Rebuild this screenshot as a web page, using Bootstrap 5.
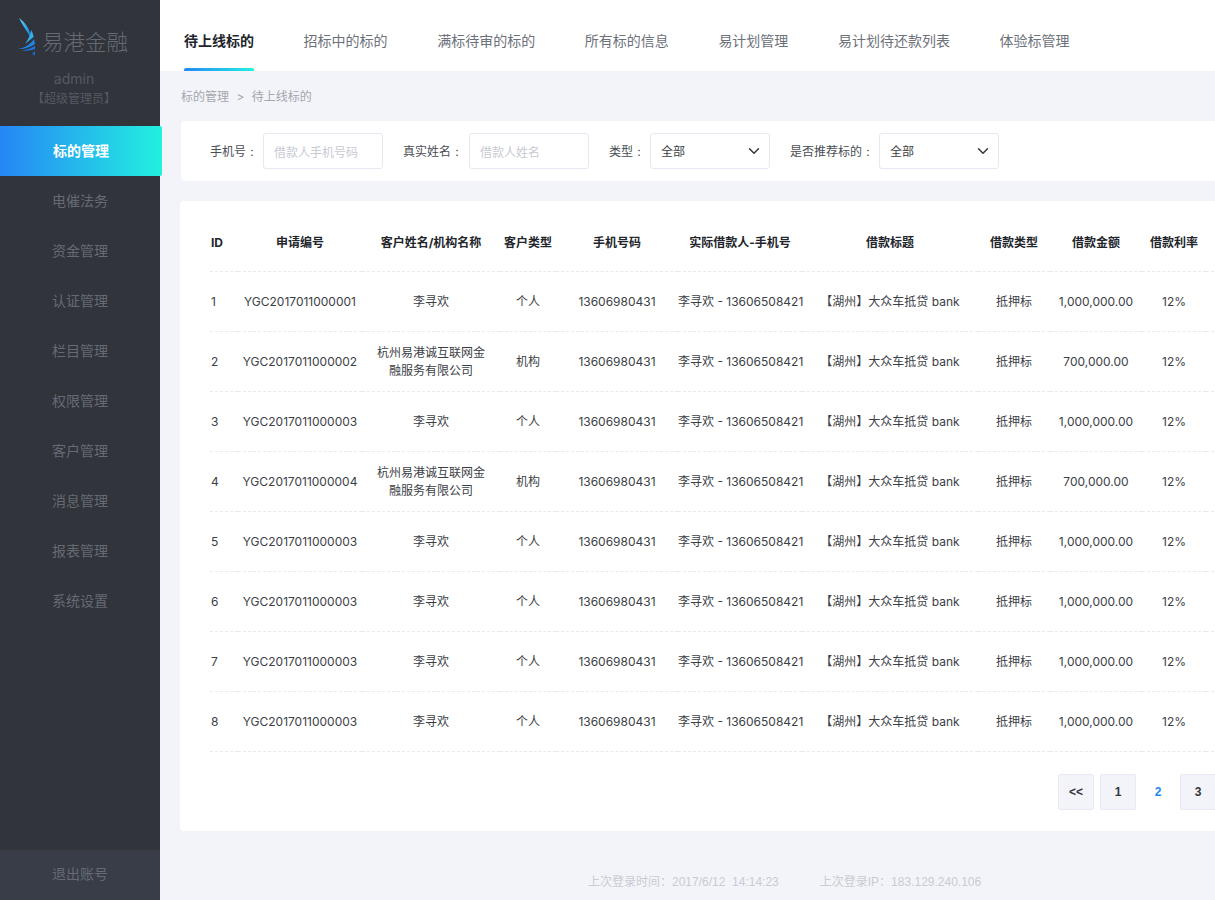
<!DOCTYPE html>
<html lang="zh-CN">
<head>
    <meta charset="UTF-8">
    <meta name="viewport" content="width=device-width, initial-scale=1.0">
    <title>标的管理</title>
    <link href="https://cdn.jsdelivr.net/npm/bootstrap@5.3.3/dist/css/bootstrap.min.css" rel="stylesheet">
    <script src="https://cdn.jsdelivr.net/npm/bootstrap@5.3.3/dist/js/bootstrap.bundle.min.js"></script>
    <style>
        body {
            font-family: Inter, "Noto Sans CJK SC", sans-serif;
            font-size: 12px;
            background: #f3f4f9;
            color: #3b3e45;
            height: 100vh;
            overflow: hidden;
        }
        /* sidebar */
        .side-bar { width: 160px; background: #31343b; position: relative; z-index: 2; }
        .logo-row { padding: 18px 0 0 18px; height: 70px; }
        .logo-name { font-size: 21.5px; color: #666a73; line-height: 1; margin: 14px 0 0 6px; font-weight: 300; white-space: nowrap; }
        .user-name { font-size: 14px; color: #555962; line-height: 18px; text-align: center; margin-left: -12px; }
        .user-role { color: #555962; line-height: 20px; text-align: center; margin: 1px 0 17px -12px; }
        .menu-link { display: block; height: 50px; line-height: 50px; text-align: center; font-size: 14px; color: #666a73; text-decoration: none; }
        .menu-link.on { width: 162px; color: #fff; font-weight: 700; background: linear-gradient(90deg, #2686f5, #22f0e0); border-radius: 0 2px 2px 0; }
        .menu-link.logout-link { background: #383d48; line-height: 48px; }
        /* top tabs */
        .top-tabs { background: #fff; height: 71px; padding-left: 24px; gap: 49.6px; flex-wrap: nowrap; }
        .top-tabs .nav-link { padding: 0; height: 71px; line-height: 81px; font-size: 14px; color: #6d717a; white-space: nowrap; position: relative; }
        .top-tabs .nav-link.active { color: #22252b; font-weight: 700; }
        .top-tabs .nav-link.active::after { content: ""; position: absolute; left: 0; right: 0; bottom: 0; height: 3px; border-radius: 2px 2px 0 0; background: linear-gradient(90deg, #2686f5, #22f0e0); }
        .crumbs { padding: 17px 0 0 21px; height: 50px; line-height: 17px; color: #a3a6ae; }
        .crumbs span { margin: 0 4px; }
        /* filter */
        .main-inner { width: 1128px; }
        .filter-box { background: #fff; height: 60px; margin-left: 21px; padding-left: 29px; border-radius: 4px; gap: 20px; }
        .filter-item { gap: 5px; color: #4a4d54; }
        .filter-item label { white-space: nowrap; padding-top: 2px; }
        .filter-item.name-item { gap: 6px; }
        .colon { display: inline-block; width: 12px; text-align: center; }
        .filter-box .form-control, .filter-box .form-select { width: 120px; height: 36px; font-size: 12px; border-color: #e6e8f2; border-radius: 3px; padding: 2px 10px 0; color: #3b3e45; box-shadow: none; }
        .filter-box .form-select { background-position: right 7px center; }
        .filter-box .form-control::placeholder { color: #c8cad3; }
        /* table */
        .table-box { background: #fff; margin: 20px 0 0 20px; height: 630px; padding: 14px 30px 0; border-radius: 4px; }
        .loan-table { table-layout: fixed; margin: 0; --bs-table-color: #3b3e45; --bs-table-border-color: #e8eaf0; }
        .loan-table th, .loan-table td { padding: 0; text-align: center; vertical-align: middle; line-height: 18px; border-bottom: 1px dashed #e8eaf0; }
        .loan-table th { height: 56px; font-weight: 700; color: #22252b; white-space: nowrap; }
        .loan-table td { height: 60px; padding-top: 1px; white-space: nowrap; }
        .loan-table .id-cell { text-align: left; padding-left: 1px; }
        .org-name { display: block; width: 108px; margin: 0 auto; white-space: normal; }
        /* pager */
        .pager-row { margin: 22px 42px 0 0; gap: 6px; }
        .pager-row .page-item .page-link { width: 36px; height: 36px; line-height: 34px; margin-left: 0; padding: 0; text-align: center; font-family: "Liberation Sans", sans-serif; font-size: 12px; font-weight: 700; color: #33363d; background: #f3f4f9; border: 1px solid #e8eaf3; border-radius: 2px !important; }
        .pager-row .page-item.active .page-link { width: 32px; background: transparent; border-color: transparent; color: #2686f5; }
        /* footer */
        .login-foot { padding: 42px 0 0 428px; gap: 41px; font-family: "Liberation Sans", "Noto Sans CJK SC", sans-serif; color: #c9cbd2; white-space: nowrap; line-height: 18px; }
    </style>
</head>
<body class="d-flex">
    <aside class="side-bar d-flex flex-column flex-shrink-0">
        <div class="logo-row d-flex">
            <svg width="18" height="38" viewBox="0 0 18 38" class="flex-shrink-0">
                <defs>
                    <linearGradient id="sailFill" x1="0" y1="0" x2="0.5" y2="1">
                        <stop offset="0" stop-color="#5ad2f8"/>
                        <stop offset="1" stop-color="#1c8de8"/>
                    </linearGradient>
                </defs>
                <path d="M1 0C7 4 12 11 13 20C9 13 4 7 1 0Z" fill="url(#sailFill)"/>
                <path d="M13 12C15 15 15.500 18 15.500 19L7 26C10 22 12.500 17 13 12Z" fill="#2fb0f0"/>
                <path d="M16 21L17 26C11 30 5 31.500 0 31C7 30 13 26 16 21Z" fill="#1e86e8"/>
                <path d="M17 27.500L17 31C12 33 7 33 3 32C9 32 14 30 17 27.500Z" fill="#1a72dd"/>
                <path d="M14 36L17 33L17 37.500Z" fill="#1668d8"/>
            </svg>
            <div class="logo-name">易港金融</div>
        </div>
        <div class="user-name">admin</div>
        <div class="user-role">【超级管理员】</div>
        <a class="menu-link on" href="#">标的管理</a>
        <a class="menu-link" href="#">电催法务</a>
        <a class="menu-link" href="#">资金管理</a>
        <a class="menu-link" href="#">认证管理</a>
        <a class="menu-link" href="#">栏目管理</a>
        <a class="menu-link" href="#">权限管理</a>
        <a class="menu-link" href="#">客户管理</a>
        <a class="menu-link" href="#">消息管理</a>
        <a class="menu-link" href="#">报表管理</a>
        <a class="menu-link" href="#">系统设置</a>
        <a class="menu-link logout-link mt-auto" href="#">退出账号</a>
    </aside>

    <main class="flex-grow-1 overflow-hidden">
        <ul class="nav top-tabs">
            <li class="nav-item"><a class="nav-link active" href="#">待上线标的</a></li>
            <li class="nav-item"><a class="nav-link" href="#">招标中的标的</a></li>
            <li class="nav-item"><a class="nav-link" href="#">满标待审的标的</a></li>
            <li class="nav-item"><a class="nav-link" href="#">所有标的信息</a></li>
            <li class="nav-item"><a class="nav-link" href="#">易计划管理</a></li>
            <li class="nav-item"><a class="nav-link" href="#">易计划待还款列表</a></li>
            <li class="nav-item"><a class="nav-link" href="#">体验标管理</a></li>
        </ul>

        <div class="main-inner">
            <div class="crumbs">标的管理 <span>&gt;</span> 待上线标的</div>

            <!-- filters -->
            <form class="filter-box d-flex align-items-center">
                <div class="filter-item d-flex align-items-center">
                    <label>手机号<span class="colon">:</span></label>
                    <input type="text" class="form-control" placeholder="借款人手机号码">
                </div>
                <div class="filter-item name-item d-flex align-items-center">
                    <label>真实姓名<span class="colon">:</span></label>
                    <input type="text" class="form-control" placeholder="借款人姓名">
                </div>
                <div class="filter-item d-flex align-items-center">
                    <label>类型<span class="colon">:</span></label>
                    <select class="form-select"><option>全部</option></select>
                </div>
                <div class="filter-item d-flex align-items-center">
                    <label>是否推荐标的<span class="colon">:</span></label>
                    <select class="form-select"><option>全部</option></select>
                </div>
            </form>

            <!-- list -->
            <div class="table-box">
                <table class="table loan-table">
                    <colgroup id="loanCols"></colgroup>
                    <thead>
                        <tr>
                            <th class="id-cell">ID</th>
                            <th>申请编号</th>
                            <th>客户姓名/机构名称</th>
                            <th>客户类型</th>
                            <th>手机号码</th>
                            <th>实际借款人-手机号</th>
                            <th>借款标题</th>
                            <th>借款类型</th>
                            <th>借款金额</th>
                            <th>借款利率</th>
                            <th></th>
                        </tr>
                    </thead>
                    <tbody id="loanRows"></tbody>
                </table>
                <ul class="pagination pager-row justify-content-end">
                    <li class="page-item"><a class="page-link" href="#">&lt;&lt;</a></li>
                    <li class="page-item"><a class="page-link" href="#">1</a></li>
                    <li class="page-item active"><a class="page-link" href="#">2</a></li>
                    <li class="page-item"><a class="page-link" href="#">3</a></li>
                </ul>
            </div>

            <div class="login-foot d-flex">
                <span>上次登录时间：2017/6/12&nbsp;&nbsp;14:14:23</span>
                <span>上次登录IP：183.129.240.106</span>
            </div>
        </div>
    </main>

    <script>
        // Column widths
        const widths = [28, 124, 138, 56, 122, 124, 176, 72, 92, 64, 52];
        document.getElementById("loanCols").innerHTML = widths.map(w => `<col style="width:${w}px">`).join("");

        // Rows
        const person = "李寻欢";
        const org = "杭州易港诚互联网金融服务有限公司";
        const loans = [
            ["YGC2017011000001", person, "个人", "1,000,000.00"],
            ["YGC2017011000002", org, "机构", "700,000.00"],
            ["YGC2017011000003", person, "个人", "1,000,000.00"],
            ["YGC2017011000004", org, "机构", "700,000.00"],
            ["YGC2017011000003", person, "个人", "1,000,000.00"],
            ["YGC2017011000003", person, "个人", "1,000,000.00"],
            ["YGC2017011000003", person, "个人", "1,000,000.00"],
            ["YGC2017011000003", person, "个人", "1,000,000.00"]
        ];
        document.getElementById("loanRows").innerHTML = loans.map((l, i) => `
            <tr>
                <td class="id-cell">${i + 1}</td>
                <td>${l[0]}</td>
                <td><span class="org-name">${l[1]}</span></td>
                <td>${l[2]}</td>
                <td>13606980431</td>
                <td>李寻欢 - 13606508421</td>
                <td>【湖州】大众车抵贷 bank</td>
                <td>抵押标</td>
                <td>${l[3]}</td>
                <td>12%</td>
                <td></td>
            </tr>`).join("");
    </script>
</body>
</html>
